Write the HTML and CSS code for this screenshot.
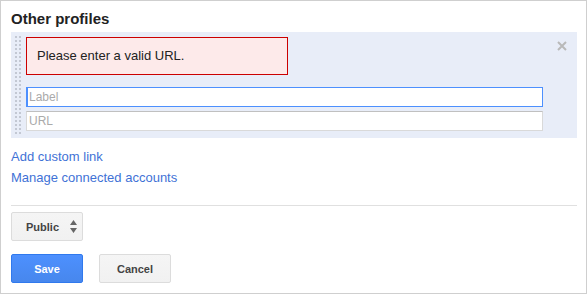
FILE: index.html
```html
<!DOCTYPE html>
<html>
<head>
  <title>Other profiles</title>
  <link rel="stylesheet" href="styles.css">
</head>
<body>
  <div class="card">
    <h3 class="title">Other profiles</h3>

    <!-- Editable link row -->
    <div class="link-row">
      <div class="grip"></div>
      <div class="fields">
        <div class="error">Please enter a valid URL.</div>
        <input type="text" class="field focused" placeholder="Label">
        <input type="text" class="field" placeholder="URL">
      </div>
      <button class="remove" title="Remove">
        <svg width="10" height="10" viewBox="0 0 10 10">
          <path d="M1 1L9 9M9 1L1 9" stroke="#b9b9b9" stroke-width="2"/>
        </svg>
      </button>
    </div>

    <div class="links">
      <a href="#">Add custom link</a>
      <a href="#">Manage connected accounts</a>
    </div>

    <hr class="sep">

    <button class="btn select">Public
      <svg width="7" height="13" viewBox="0 0 7 13">
        <path d="M0 5L3.5 0L7 5Z M0 8L3.5 13L7 8Z" fill="#666"/>
      </svg>
    </button>

    <div class="actions">
      <button class="btn primary">Save</button>
      <button class="btn">Cancel</button>
    </div>
  </div>
</body>
</html>
```

FILE: styles.css
```css
body {
  margin: 0;
  font-family: "Liberation Sans", Arial, sans-serif;
  background-color: #fff;
}
.card {
  box-sizing: border-box;
  width: 587px;
  height: 294px;
  border: 1px solid #cfcfcf;
  padding: 9px 10px 0 10px;
}
.title {
  margin: 0 0 4px 0;
  font-size: 15px;
  line-height: 18px;
  font-weight: bold;
  color: #222;
}
.link-row {
  display: flex;
  width: 566px;
  height: 106px;
  box-sizing: border-box;
  background-color: #e8edf8;
}
.grip {
  width: 6px;
  margin: 4px 5px 2px 4px;
  background:
    repeating-linear-gradient(to bottom, transparent 0 2px, #e8edf8 2px 4px),
    repeating-linear-gradient(to right, #c3c8d3 0 2px, transparent 2px 4px);
}
.fields {
  width: 517px;
  padding-top: 5px;
}
.error {
  box-sizing: border-box;
  width: 262px;
  height: 38px;
  padding: 10px 10px;
  font-size: 13px;
  line-height: 16px;
  color: #222;
  background-color: #fdeaea;
  border: 1px solid #c00;
  margin-bottom: 12px;
}
.field {
  display: block;
  box-sizing: border-box;
  width: 517px;
  height: 20px;
  margin: 0 0 4px 0;
  padding: 0 2px;
  font-family: "Liberation Sans", Arial, sans-serif;
  font-size: 12px;
  border: 1px solid #d9d9d9;
  border-top-color: #c0c0c0;
  background: #fff;
  outline: none;
}
.field::placeholder {
  color: #aaa;
}
.field.focused {
  border-color: #4d90fe;
  box-shadow: inset 1px 0 0 #4d90fe;
}
.remove {
  margin: 9px 10px 0 auto;
  padding: 0;
  width: 10px;
  height: 10px;
  border: none;
  background: none;
  cursor: pointer;
  line-height: 0;
}
.links {
  margin-top: 8px;
}
.links a {
  display: block;
  font-size: 13px;
  line-height: 21px;
  color: #3f72d6;
  text-decoration: none;
}
.sep {
  width: 566px;
  margin: 17px 0 6px 0;
  border: none;
  border-top: 1px solid #e0e0e0;
  height: 0;
}
.btn {
  box-sizing: border-box;
  width: 72px;
  height: 29px;
  padding: 0;
  font-family: "Liberation Sans", Arial, sans-serif;
  font-size: 11px;
  font-weight: bold;
  color: #444;
  background: linear-gradient(#f5f5f5, #f1f1f1);
  border: 1px solid #dcdcdc;
  border-radius: 2px;
  cursor: pointer;
}
.select {
  display: flex;
  align-items: center;
  padding: 0 5px 0 14px;
  justify-content: space-between;
}
.actions {
  display: flex;
  gap: 16px;
  margin-top: 13px;
}
.primary {
  color: #fff;
  background: linear-gradient(#4d90fe, #4787ed);
  border-color: #3079ed;
}
```
